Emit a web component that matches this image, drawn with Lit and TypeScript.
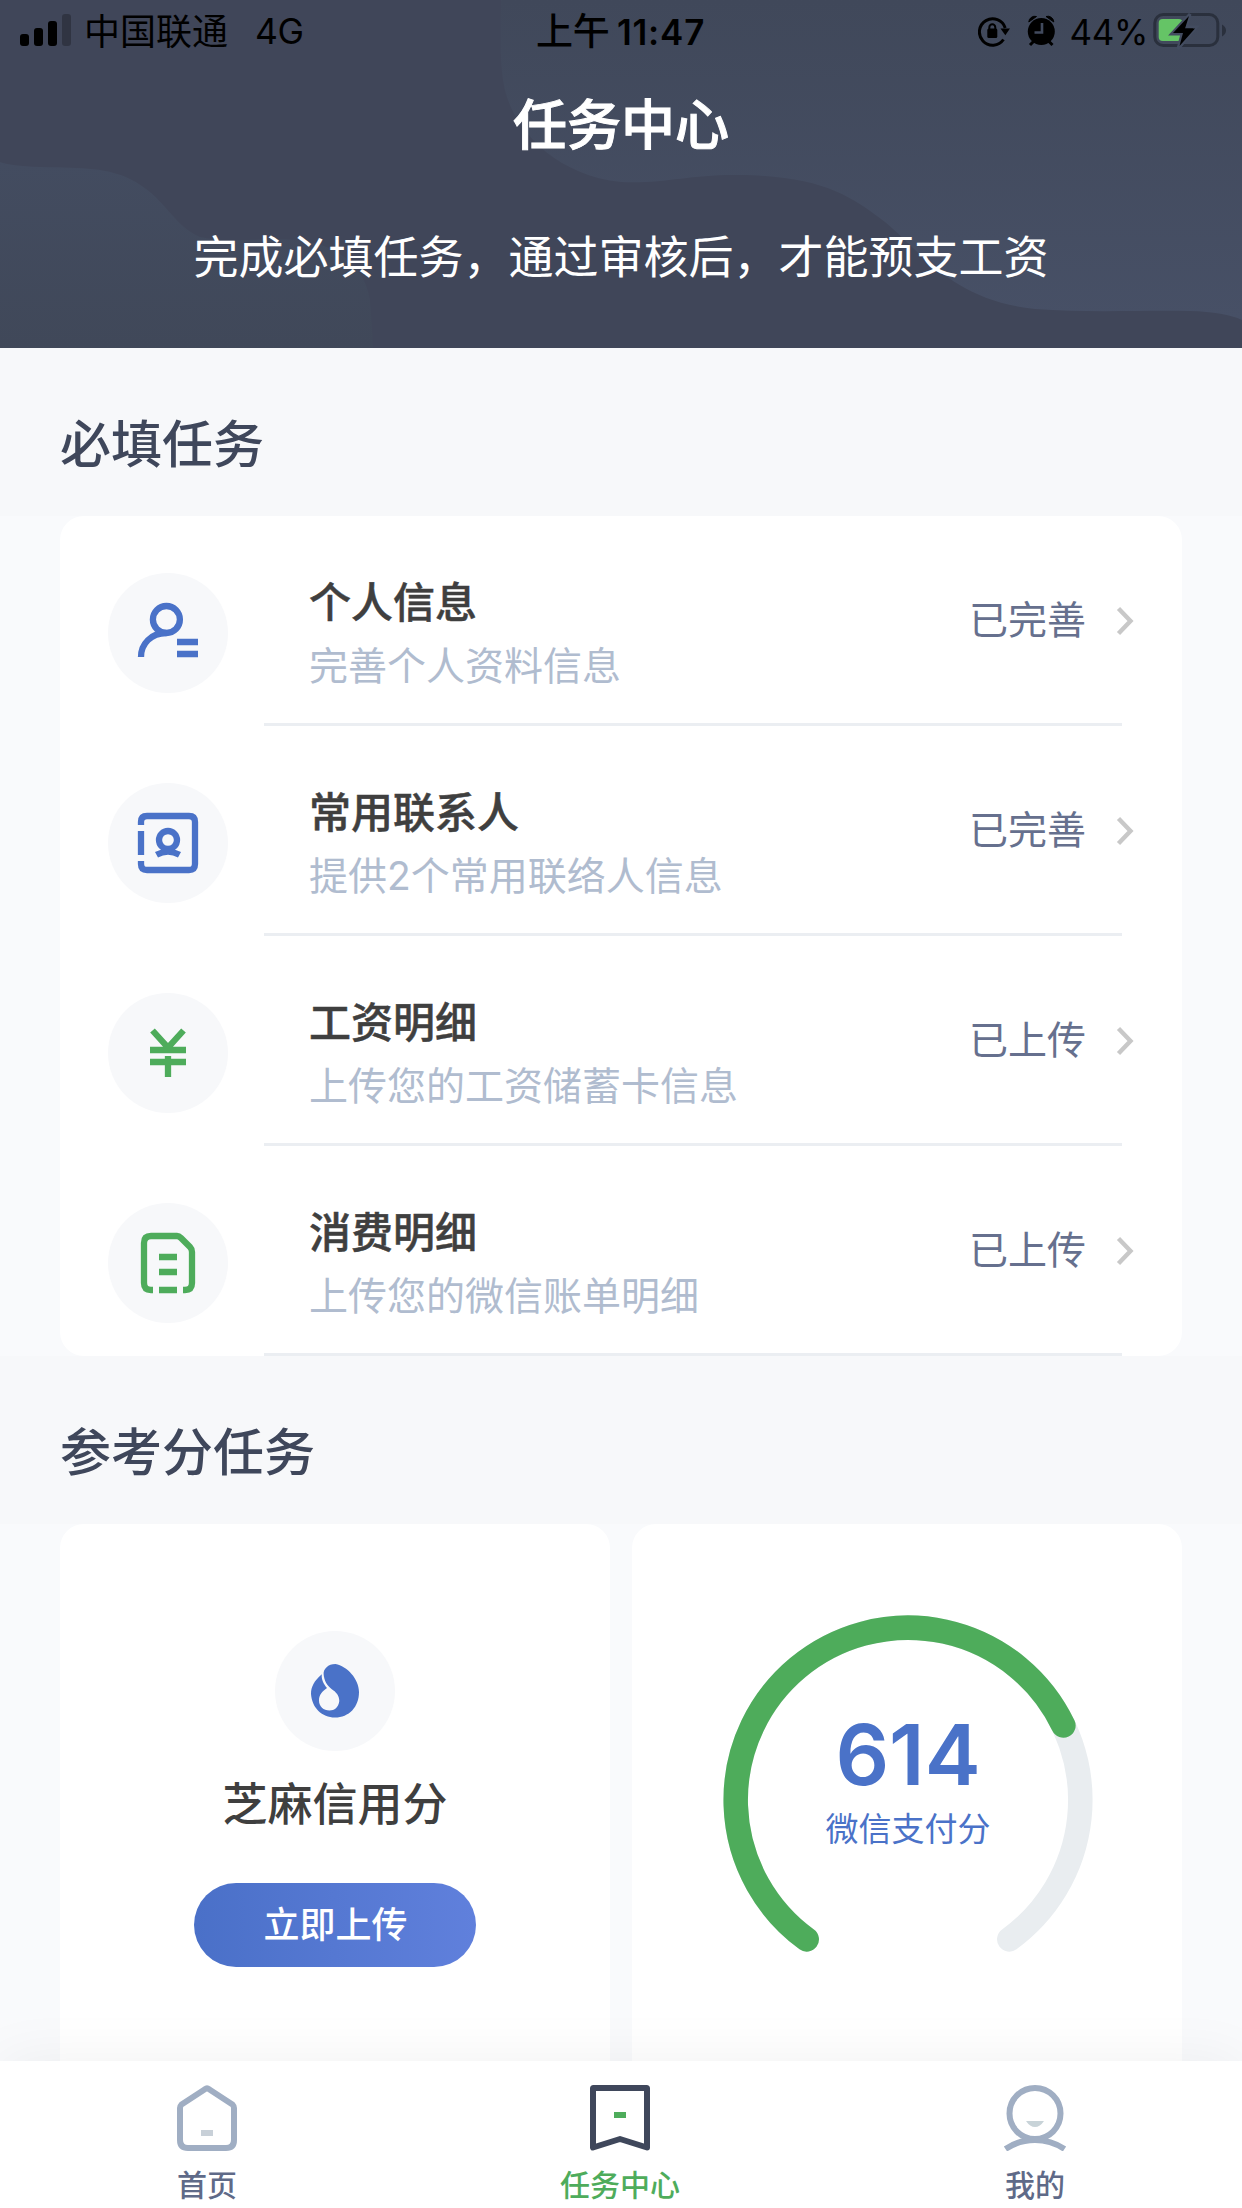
import { LitElement, html, css, svg } from "lit";
import { customElement, property } from "lit/decorators.js";

const icons = {
  person: svg`<g fill="none" stroke="#4a72c8" stroke-width="6.300"><circle cx="58.4" cy="46.5" r="13.5"/><path d="M33 84C33 71 43 60 58.4 60"/><path d="M69 69h21M69 81h21"/></g>`,
  contact: svg`<g fill="none" stroke="#4a72c8" stroke-width="6.300"><path d="M33 42V39Q33 33 39 33H81Q87 33 87 39V81Q87 87 81 87H39Q33 87 33 81V78M33 48V72"/><circle cx="60" cy="57" r="9"/><path d="M48.500 71.800Q60 65.500 71.500 71.800"/></g>`,
  yuan: svg`<g fill="none" stroke="#4eac5b" stroke-width="6.300"><path d="M44.500 37.500L60 54.500L75.500 37.500M42 57H78M42 69H78M60 63V84"/></g>`,
  bill: svg`<g fill="none" stroke="#4eac5b" stroke-width="6.300"><path d="M45 87H43Q36 87 36 80V40Q36 33 43 33H69Q71 33 73 35L82 44Q84 46 84 49V80Q84 87 77 87H75M51 87H69M51 54H69M51 69H69"/></g>`,
  sesame: svg`<path fill="#4a72c8" d="M46.800 43.300C39 50 36 56 36 63C37 77 47 86.500 60 86.500C74 86.500 84 76 84 61C84 48 72 35 60.500 33C53 33 48.400 38 48.600 43C49 49.500 52 54.500 56.500 58C61 61 64.300 64.500 64.300 70C63.500 76.500 59.500 79.500 54.500 79.500C48.500 79.500 44 75.500 44 69.500C44 63.500 47.500 60 52 57C48.500 53 46.200 48.500 46.800 43.300Z"/>`,
};

const tabIcons = {
  home: svg`<path fill="none" stroke="#a0aec3" stroke-width="6" d="M34 4.200Q36 2.400 38 4.200L61.500 19.500Q63 21 63 23V55Q63 63 55 63H17Q9 63 9 55V23Q9 21 10.500 19.500Z"/><path fill="#c8d0d8" d="M30 45h12v6H30z"/>`,
  task: svg`<path fill="none" stroke="#3f475b" stroke-width="6" stroke-linejoin="round" d="M9 3.500Q9 3 9.500 3H62.500Q63 3 63 3.500V62.500L36 54L9 62.500Z"/><path fill="#4eac5b" d="M30 27h12v6H30z"/>`,
  mine: svg`<g fill="none" stroke="#a0aec3" stroke-width="6"><circle cx="36" cy="28.500" r="25.500"/><path d="M6.500 64Q20 55 36 55Q52 55 65.500 64"/></g><path fill="#c8d3d8" d="M27 36H45Q41 42 36 42Q31 42 27 36Z"/>`,
};

@customElement("status-bar")
class StatusBar extends LitElement {
  static styles = css`
    :host { display: block; color: #000; }
    .bar { height: 64px; display: grid; grid-template-columns: 1fr auto 1fr; align-items: center; padding: 0 15px 0 20px; box-sizing: border-box; font: 400 36px/64px Inter, "Noto Sans CJK SC", sans-serif; }
    .left, .right { display: flex; align-items: center; }
    .right { justify-content: flex-end; }
    .carrier { margin-left: 12px; }
    .net { margin-left: 27px; font-size: 35.500px; letter-spacing: -0.5px; }
    .time { font-weight: 500; font-size: 37px; display: flex; gap: 7px; margin-right: 6px; }
    .clock { font-weight: 600; font-size: 35px; letter-spacing: 0.8px; }
    .pct { font-size: 35px; letter-spacing: -0.4px; margin: 0 5px 0 12px; }
    svg { display: block; }
  `;
  render() {
    return html`<div class="bar">
      <div class="left">
        <svg width="52" height="64"><rect x="0" y="34" width="9" height="12" rx="3"/><rect x="14" y="28" width="9" height="18" rx="3"/><rect x="28" y="21" width="9" height="25" rx="3"/><rect x="42" y="14" width="9" height="32" rx="3" opacity=".25"/></svg>
        <span class="carrier">中国联通</span><span class="net">4G</span>
      </div>
      <div class="time"><span>上午</span><span class="clock">11:47</span></div>
      <div class="right">
        <svg width="80" height="64" viewBox="978 0 80 64">
          <path d="M1003.500 39.500A13.200 13.200 0 1 1 1005.200 28" fill="none" stroke="#000" stroke-width="3"/>
          <path d="M1000.500 28.500H1010L1005.300 35.200Z"/>
          <rect x="987.300" y="28.500" width="10" height="9.500" rx="1.500"/>
          <path d="M989.300 29V27.500A3 3.200 0 0 1 995.300 27.500V29" fill="none" stroke="#000" stroke-width="2"/>
          <circle cx="1041.300" cy="31.500" r="13.500"/>
          <path d="M1034 41l-4 4M1048.500 41l4 4" stroke="#000" stroke-width="3"/>
          <path d="M1028.800 22A6 6 0 0 1 1036.500 16.500ZM1046 16.500A6 6 0 0 1 1053.800 22Z" stroke="#000" stroke-width="1"/>
          <path d="M1042 23V32.500H1034.500" fill="none" stroke="#414a5d" stroke-width="2.600"/>
        </svg>
        <span class="pct">44%</span>
        <svg width="74" height="64" viewBox="1153 0 74 64">
          <rect x="1154.800" y="14.500" width="63" height="31" rx="8.500" fill="none" stroke="#2a303d" stroke-width="3"/>
          <path d="M1222 24.500Q1226 27 1226 30.500Q1226 34 1222 36.500Z" fill="#2a303d"/>
          <rect x="1158.700" y="19" width="24" height="22" rx="4" fill="#65c466"/>
          <path d="M1190 14L1171.500 34H1182L1178 49L1196.500 27H1186.500Z" stroke="#434c60" stroke-width="3"/>
          <path d="M1189 16L1173 33H1183L1179.500 46L1195 28.500H1185Z"/>
        </svg>
      </div>
    </div>`;
  }
}

@customElement("page-header")
class PageHeader extends LitElement {
  static styles = css`
    :host { display: block; height: 348px; background: #404659; position: relative; overflow: hidden; }
    .waves { position: absolute; inset: 0; }
    .content { position: relative; color: #fff; text-align: center; font-family: Inter, "Noto Sans CJK SC", sans-serif; }
    .title { margin: 32px 0 0; font-size: 54px; line-height: 60px; font-weight: 500; -webkit-text-stroke: 1px #fff; }
    .hint { margin: 72px 0 0; font-size: 45px; line-height: 60px; font-weight: 400; white-space: nowrap; }
  `;
  render() {
    return html`<svg class="waves" width="1242" height="348" viewBox="0 0 1242 348">
        <defs>
          <linearGradient id="a" x1="0" y1="0" x2="0" y2="1"><stop offset="0" stop-color="#40485a"/><stop offset="1" stop-color="#475066"/></linearGradient>
          <linearGradient id="b" x1="0" y1="0" x2="0" y2="1"><stop offset="0" stop-color="#434c60"/><stop offset="1" stop-color="#404859"/></linearGradient>
        </defs>
        <path fill="url(#a)" d="M501 0C500 50 500 78 508 100C520 135 560 176 621 182C665 184 690 174 740 175C820 176 850 195 885 222C920 250 950 300 1035 309C1090 313 1140 310 1190 311Q1225 312 1242 320V0Z"/>
        <path fill="url(#b)" d="M0 162Q10 166 40 167C85 168 108 168 130 179C165 196 172 225 200 237C235 245 270 235 310 242C345 250 365 270 370 300Q372 325 373 348H0Z"/>
      </svg>
      <div class="content">
        <status-bar></status-bar>
        <h1 class="title">任务中心</h1>
        <p class="hint">完成必填任务，通过审核后，才能预支工资</p>
      </div>`;
  }
}

@customElement("task-row")
class TaskRow extends LitElement {
  @property() icon: keyof typeof icons = "person";
  @property() name = "";
  @property() desc = "";
  @property() status = "";
  static styles = css`
    :host { display: flex; height: 210px; box-sizing: border-box; padding-right: 60px; font-family: Inter, "Noto Sans CJK SC", sans-serif; }
    .lead { width: 204px; padding: 57px 0 0 48px; box-sizing: border-box; }
    .disc { display: block; border-radius: 50%; background: #f7f8fa; }
    .body { flex: 1; display: flex; align-items: flex-start; border-bottom: 3px solid #ebeef2; padding-left: 45px; box-sizing: border-box; white-space: nowrap; }
    .text { flex: 1; padding-top: 63px; }
    .name { font-size: 42px; line-height: 48px; font-weight: 500; color: #3f3f3f; -webkit-text-stroke: 0.5px #3f3f3f; }
    .desc { margin-top: 15px; font-size: 39px; line-height: 48px; color: #b0bccf; }
    .status { padding-top: 80px; font-size: 39px; line-height: 48px; color: #66708e; }
    .chev { margin: 90px -12px 0 30px; }
  `;
  render() {
    return html`<div class="lead"><svg class="disc" width="120" height="120">${icons[this.icon]}</svg></div>
      <div class="body">
        <div class="text"><div class="name">${this.name}</div><div class="desc">${this.desc}</div></div>
        <div class="status">${this.status}</div>
        <svg class="chev" width="18" height="30"><path d="M2.500 2.500L14.500 15L2.500 27.500" fill="none" stroke="#c8c8c8" stroke-width="4.400"/></svg>
      </div>`;
  }
}

@customElement("score-gauge")
class ScoreGauge extends LitElement {
  @property({ type: Number }) score = 0;
  @property({ type: Number }) ratio = 0;
  @property() label = "";
  static styles = css`
    :host { display: grid; justify-items: center; color: #4a72c8; font-family: Inter, "Noto Sans CJK SC", sans-serif; }
    .ring, .text { grid-area: 1 / 1; }
    .text { text-align: center; padding-top: 98px; }
    .score { font-size: 84px; line-height: 84px; font-weight: 600; }
    .label { font-size: 33px; line-height: 40px; margin-top: 12px; }
  `;
  render() {
    const r = 172.3, c = 185;
    const at = (deg: number) => {
      const a = (deg * Math.PI) / 180;
      return `${c + r * Math.cos(a)} ${c + r * Math.sin(a)}`;
    };
    const sweep = 288 * this.ratio;
    return html`<svg class="ring" width="370" height="370" fill="none" stroke-width="24.500" stroke-linecap="round">
        <path stroke="#e9edf0" d="M${at(126)}A${r} ${r} 0 1 1 ${at(54)}"/>
        <path stroke="#4eac5b" d="M${at(126)}A${r} ${r} 0 ${sweep > 180 ? 1 : 0} 1 ${at(126 + sweep)}"/>
      </svg>
      <div class="text"><div class="score">${this.score}</div><div class="label">${this.label}</div></div>`;
  }
}

@customElement("app-root")
class AppRoot extends LitElement {
  static styles = css`
    :host { display: flex; flex-direction: column; width: 1242px; height: 2208px; overflow: hidden; background: #f9fafc; font-family: Inter, "Noto Sans CJK SC", sans-serif; }
    .main { flex: 1; min-height: 0; overflow: hidden; }
    .heading { margin: 0; height: 168px; box-sizing: border-box; padding: 67px 60px 0; background: #f7f8fa; font-size: 51px; line-height: 60px; font-weight: 500; color: #3f475b; }
    .list { margin: 0 60px; background: #fff; border-radius: 24px; }
    .cards { display: grid; grid-template-columns: 1fr 1fr; gap: 22px; padding: 0 60px; }
    .card { background: #fff; border-radius: 24px; height: 560px; box-sizing: border-box; display: flex; flex-direction: column; align-items: center; }
    .sesame { padding-top: 107px; }
    .disc { border-radius: 50%; background: #f7f8fa; }
    .name { margin-top: 24px; font-size: 45px; line-height: 60px; font-weight: 500; color: #3f3f3f; }
    .upload { margin-top: 48px; width: 282px; height: 84px; border: 0; padding: 1px 0 0 1px; border-radius: 42px; background: linear-gradient(90deg, #4a70c8, #6080dc); color: #fff; font: 500 36px/83px Inter, "Noto Sans CJK SC", sans-serif; }
    .gauge { padding: 91px 0 0 2px; }
    .tabs { height: 147px; background: #fff; display: grid; grid-template-columns: repeat(3, 1fr); position: relative; box-shadow: 0 0 60px rgba(0, 0, 0, 0.06); }
    .tab { display: flex; flex-direction: column; align-items: center; padding-top: 24px; box-sizing: border-box; color: #5f6a88; font-size: 30px; line-height: 36px; font-weight: 500; }
    .tab svg { display: block; margin-bottom: 16px; }
    .active { color: #4eac5b; padding-right: 2px; }
  `;
  rows = [
    { icon: "person", name: "个人信息", desc: "完善个人资料信息", status: "已完善" },
    { icon: "contact", name: "常用联系人", desc: "提供2个常用联络人信息", status: "已完善" },
    { icon: "yuan", name: "工资明细", desc: "上传您的工资储蓄卡信息", status: "已上传" },
    { icon: "bill", name: "消费明细", desc: "上传您的微信账单明细", status: "已上传" },
  ];
  render() {
    return html`<page-header></page-header>
      <main class="main">
        <h2 class="heading">必填任务</h2>
        <div class="list">
          ${this.rows.map((r) => html`<task-row .icon=${r.icon as any} .name=${r.name} .desc=${r.desc} .status=${r.status}></task-row>`)}
        </div>
        <h2 class="heading">参考分任务</h2>
        <div class="cards">
          <section class="card sesame">
            <svg class="disc" width="120" height="120">${icons.sesame}</svg>
            <div class="name">芝麻信用分</div>
            <button class="upload">立即上传</button>
          </section>
          <section class="card gauge">
            <score-gauge .score=${614} .ratio=${0.7236} label="微信支付分"></score-gauge>
          </section>
        </div>
      </main>
      <nav class="tabs">
        <div class="tab"><svg width="72" height="66">${tabIcons.home}</svg>首页</div>
        <div class="tab active"><svg width="72" height="66">${tabIcons.task}</svg>任务中心</div>
        <div class="tab"><svg width="72" height="66">${tabIcons.mine}</svg>我的</div>
      </nav>`;
  }
}
